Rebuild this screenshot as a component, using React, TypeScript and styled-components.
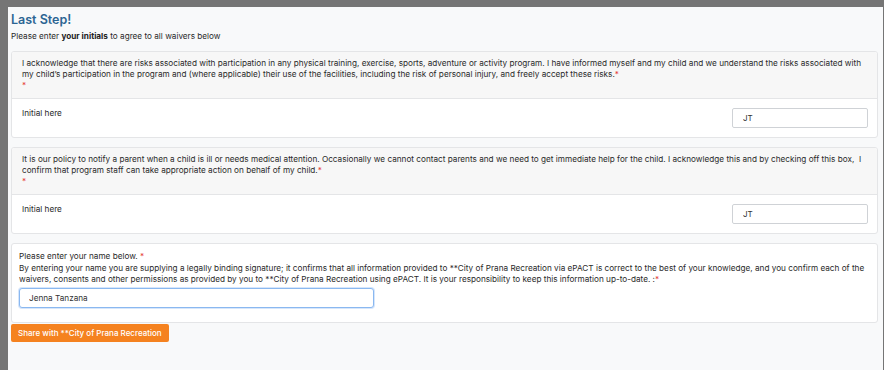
import React from "react";
import styled, { createGlobalStyle } from "styled-components";

const GlobalStyle = createGlobalStyle`
  html, body {
    margin: 0;
    padding: 0;
    background: #757575;
    height: 100%;
  }
  #root {
    height: 100%;
  }
  * {
    box-sizing: border-box;
  }
`;

const Frame = styled.div`
  margin: 7px 1px 0 8px;
  height: 363px;
  background: #f8f9fa;
  padding: 5px 5px 0 3px;
  font-family: Inter, "Noto Sans", sans-serif;
  font-size: 8.2px;
  color: #2a2a2a;
  overflow: hidden;
`;

const Title = styled.h2`
  margin: 0;
  font-size: 12.5px;
  font-weight: 600;
  color: #2c6593;
  line-height: 16px;
`;

const Intro = styled.p`
  margin: 3px 0 9px;
  line-height: 11px;

  b {
    font-weight: 700;
    color: #222;
  }
`;

const Card = styled.div`
  border: 1px solid #e4e5e7;
  border-radius: 3px;
  background: #fff;
  margin-bottom: 9px;
  overflow: hidden;
`;

const CardHeader = styled.div`
  background: #f7f7f7;
  border-bottom: 1px solid #e4e5e7;
  padding: 6px 10px 7px;
  line-height: 11px;
`;

const CardBody = styled.div`
  display: flex;
  justify-content: space-between;
  align-items: flex-start;
  padding: 9px 9px 9px 10px;
  line-height: 11px;
`;

const Req = styled.span`
  color: #e53935;
`;

const InitialInput = styled.input`
  width: 136px;
  height: 20px;
  border: 1px solid #cfd2d6;
  border-radius: 2px;
  padding: 0 10px;
  font-family: inherit;
  font-size: 8px;
  color: #333;
  background: #fff;
  outline: none;
`;

const SignCard = styled.div`
  border: 1px solid #e4e5e7;
  border-radius: 3px;
  background: #fff;
  padding: 7px 10px 14px 7px;
  line-height: 11.5px;
`;

const NameInput = styled.input`
  display: block;
  margin-top: 2px;
  width: 355px;
  height: 20px;
  border: 1px solid #8ab8f0;
  border-radius: 3px;
  box-shadow: 0 0 0 1px #d6e6fb;
  padding: 0 9px;
  font-family: inherit;
  font-size: 8.2px;
  color: #333;
  background: #fff;
  outline: none;
`;

const ShareButton = styled.button`
  display: block;
  margin-top: 1px;
  height: 18px;
  padding: 0 7px;
  border: none;
  border-radius: 2px;
  background: #f5821f;
  color: #fff;
  font-family: inherit;
  font-size: 8px;
  font-weight: 500;
  cursor: pointer;
`;

type Waiver = { id: number; text: string; initials: string };

const waivers: Waiver[] = [
  {
    id: 1,
    text:
      "I acknowledge that there are risks associated with participation in any physical training, exercise, sports, adventure or activity program. I have informed myself and my child and we understand the risks associated with my child’s participation in the program and (where applicable) their use of the facilities, including the risk of personal injury, and freely accept these risks.",
    initials: "JT",
  },
  {
    id: 2,
    text:
      "It is our policy to notify a parent when a child is ill or needs medical attention. Occasionally we cannot contact parents and we need to get immediate help for the child. I acknowledge this and by checking off this box,\u00a0 I confirm that program staff can take appropriate action on behalf of my child.",
    initials: "JT",
  },
];

export default function App() {
  return (
    <>
      <GlobalStyle />
      <Frame>
        <Title>Last Step!</Title>
        <Intro>
          Please enter <b>your initials</b> to agree to all waivers below
        </Intro>
        {waivers.map((w) => (
          <Card key={w.id}>
            <CardHeader>
              {w.text}
              <Req>*</Req>
              <br />
              <Req>*</Req>
            </CardHeader>
            <CardBody>
              <span>Initial here</span>
              <InitialInput defaultValue={w.initials} />
            </CardBody>
          </Card>
        ))}
        <SignCard>
          Please enter your name below. <Req>*</Req>
          <br />
          By entering your name you are supplying a legally binding signature; it confirms that all information provided to **City of Prana Recreation via ePACT is correct to the best of your knowledge, and you confirm each of the waivers, consents and other permissions as provided by you to **City of Prana Recreation using ePACT. It is your responsibility to keep this information up-to-date. :<Req>*</Req>
          <NameInput defaultValue="Jenna Tanzana" />
        </SignCard>
        <ShareButton>Share with **City of Prana Recreation</ShareButton>
      </Frame>
    </>
  );
}
